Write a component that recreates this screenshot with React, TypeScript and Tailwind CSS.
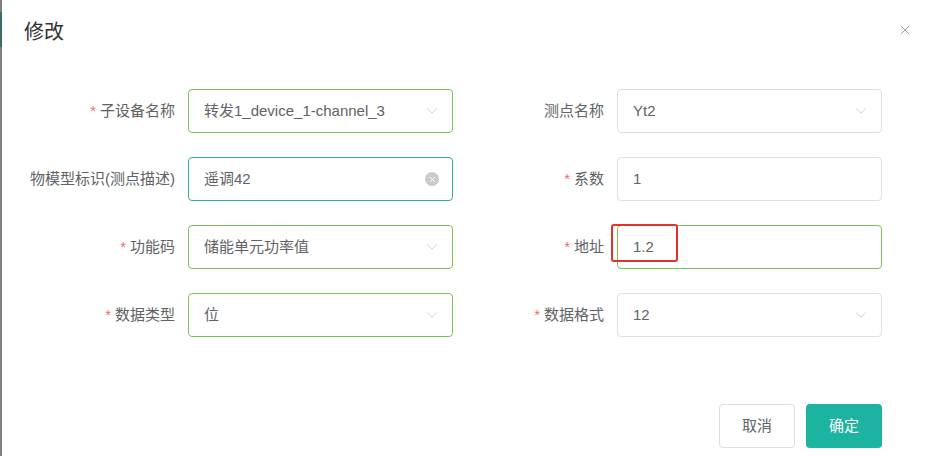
import { X, ChevronDown } from "lucide-react";

const FONT = {
  fontFamily: '"Liberation Sans", "Noto Sans CJK SC", sans-serif',
};

type Field = {
  label: string;
  required?: boolean;
  value: string;
  kind: "select" | "input" | "clear";
  border: string;
};

const LEFT: Field[] = [
  { label: "子设备名称", required: true, value: "转发1_device_1-channel_3", kind: "select", border: "border-[#7cc35a]" },
  { label: "物模型标识(测点描述)", value: "遥调42", kind: "clear", border: "border-[#3aa99d]" },
  { label: "功能码", required: true, value: "储能单元功率值", kind: "select", border: "border-[#7cc35a]" },
  { label: "数据类型", required: true, value: "位", kind: "select", border: "border-[#7cc35a]" },
];

const RIGHT: Field[] = [
  { label: "测点名称", value: "Yt2", kind: "select", border: "border-[#dcdfe6]" },
  { label: "系数", required: true, value: "1", kind: "input", border: "border-[#dcdfe6]" },
  { label: "地址", required: true, value: "1.2", kind: "input", border: "border-[#7cc35a]" },
  { label: "数据格式", required: true, value: "12", kind: "select", border: "border-[#dcdfe6]" },
];

function FieldBox({ field, highlight }: { field: Field; highlight?: boolean }) {
  return (
    <div
      className={`relative flex h-[44px] w-[265px] items-center rounded-[4px] border bg-white pl-[15px] pr-[11px] text-[15px] text-[#606266] ${field.border}`}
    >
      <span className="flex-1 truncate">{field.value}</span>
      {field.kind === "select" && (
        <ChevronDown className="h-[18px] w-[18px] text-[#c0c4cc]" strokeWidth={1.1} />
      )}
      {field.kind === "clear" && (
        <span className="mr-[2px] flex h-[14px] w-[14px] items-center justify-center rounded-full bg-[#c8cad0]">
          <X className="h-[9px] w-[9px] text-white" strokeWidth={2.5} />
        </span>
      )}
      {highlight && (
        <div className="absolute left-[-7px] top-[-2px] h-[38px] w-[67px] rounded-[3px] border-[2.5px] border-[#e8302a]" />
      )}
    </div>
  );
}

function Label({ field, width }: { field: Field; width: string }) {
  return (
    <div className={`${width} shrink-0 whitespace-nowrap pr-[13px] text-right text-[15px] text-[#606266]`}>
      {field.required && <span className="mr-[4px] text-[#f56c6c]">*</span>}
      {field.label}
    </div>
  );
}

export default function App() {
  return (
    <div className="flex h-[456px] w-[930px] bg-white" style={FONT}>
      <div className="flex w-[2px] flex-col bg-[#808080]">
        <div className="mt-[12px] h-[35px] bg-[#3e6b66]" />
      </div>
      <div className="flex flex-1 flex-col">
        <div className="flex items-start justify-between pl-[22px] pr-[17px] pt-[20px]">
          <h2 className="text-[20px] leading-[24px] text-[#303133]">修改</h2>
          <X className="mt-[2px] h-[16px] w-[16px] text-[#909399]" strokeWidth={1.3} />
        </div>

        <div className="mt-[45px] flex flex-col gap-[24px] pl-[18px]">
          {LEFT.map((lf, i) => {
            const rf = RIGHT[i];
            return (
              <div key={lf.label} className="flex items-center">
                <Label field={lf} width="w-[168px]" />
                <FieldBox field={lf} />
                <Label field={rf} width="w-[164px]" />
                <FieldBox field={rf} highlight={rf.label === "地址"} />
              </div>
            );
          })}
        </div>

        <div className="mt-[67px] flex justify-end gap-[11px] pr-[48px]">
          <button className="h-[44px] w-[76px] rounded-[4px] border border-[#dcdfe6] bg-white text-[15px] text-[#606266]">
            取消
          </button>
          <button className="h-[44px] w-[76px] rounded-[4px] bg-[#1cb3a0] text-[15px] text-white">
            确定
          </button>
        </div>
      </div>
    </div>
  );
}
